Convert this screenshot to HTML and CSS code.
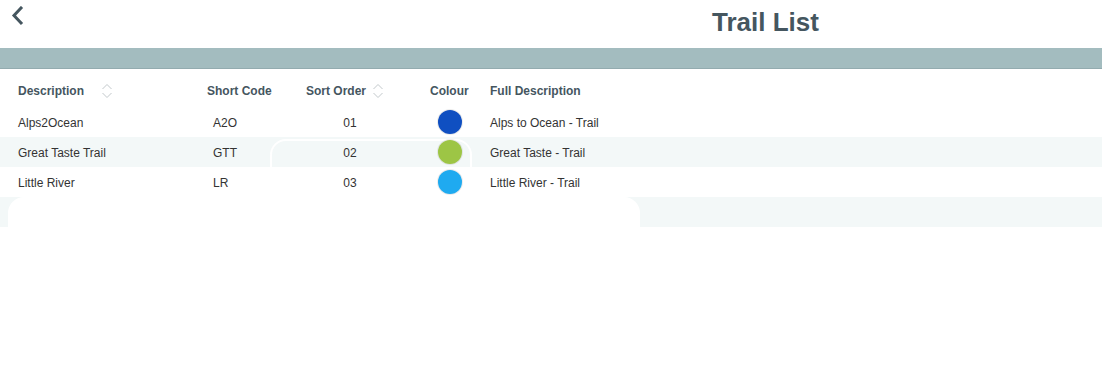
FILE: index.html
```html
<!DOCTYPE html>
<html lang="en">
<head>
    <meta charset="UTF-8">
    <title>Trail List</title>
    <link rel="stylesheet" href="styles.css">
</head>
<body>

<header class="topbar">
    <a class="back" href="#">
        <svg width="14" height="20" viewBox="0 0 14 20"><path d="M10 2 L3 9.5 L10 17" fill="none" stroke="#45565f" stroke-width="3" stroke-linecap="square"/></svg>
    </a>
    <h1>Trail List</h1>
</header>

<div class="band"></div>

<div class="table">
    <div class="row head">
        <div class="c1">Description <span class="sort"><svg width="12" height="16" viewBox="0 0 12 16"><path d="M1.5 6 L6 1.5 L10.5 6 M1.5 10 L6 14.5 L10.5 10" fill="none" stroke="#c3c9cc" stroke-width="1"/></svg></span></div>
        <div class="c2">Short Code</div>
        <div class="c3">Sort Order <span class="sort"><svg width="12" height="16" viewBox="0 0 12 16"><path d="M1.5 6 L6 1.5 L10.5 6 M1.5 10 L6 14.5 L10.5 10" fill="none" stroke="#c3c9cc" stroke-width="1"/></svg></span></div>
        <div class="c4">Colour</div>
        <div class="c5">Full Description</div>
    </div>
    <div class="row">
        <div class="c1">Alps2Ocean</div>
        <div class="c2">A2O</div>
        <div class="c3">01</div>
        <div class="c4"><span class="dot" style="background:#0f4fc1"></span></div>
        <div class="c5">Alps to Ocean - Trail</div>
    </div>
    <div class="row alt">
        <div class="ghost"></div>
        <div class="c1">Great Taste Trail</div>
        <div class="c2">GTT</div>
        <div class="c3">02</div>
        <div class="c4"><span class="dot" style="background:#9dc545"></span></div>
        <div class="c5">Great Taste - Trail</div>
    </div>
    <div class="row">
        <div class="c1">Little River</div>
        <div class="c2">LR</div>
        <div class="c3">03</div>
        <div class="c4"><span class="dot" style="background:#1faaf0"></span></div>
        <div class="c5">Little River - Trail</div>
    </div>
    <div class="row alt empty">
        <div class="card"></div>
    </div>
</div>

</body>
</html>
```

FILE: styles.css
```css
body {
    margin: 0;
    font-family: "Liberation Sans", Arial, sans-serif;
    background: #fff;
    color: #333;
}
.topbar {
    height: 48px;
    position: relative;
    display: flex;
    align-items: flex-start;
}
.back {
    display: block;
    margin: 6px 0 0 11px;
}
.topbar h1 {
    margin: 7px 0 0 687px;
    font-size: 26px;
    font-weight: bold;
    color: #45565f;
    line-height: 30px;
}
.band {
    height: 20px;
    background: #a3bcbf;
    border-bottom: 1px solid #93abaf;
}
.table {
    font-size: 12px;
}
.row {
    display: grid;
    grid-template-columns: 200px 100px 100px 90px 1fr;
    align-items: center;
    height: 30px;
    position: relative;
}
.row.head {
    height: 32px;
    padding-top: 6px;
    font-weight: bold;
    color: #45565f;
}
.row.alt {
    background: #f3f8f8;
}
.row .c1, .row .c2, .row .c3, .row .c5 {
    position: relative;
    padding-top: 2px;
}
.head .c1, .head .c2, .head .c3, .head .c5 {
    padding-top: 0;
}
.c1 {
    padding-left: 18px;
    display: flex;
    align-items: center;
}
.c2 {
    padding-left: 13px;
}
.head .c2 {
    padding-left: 7px;
}
.c3 {
    text-align: center;
}
.head .c3 {
    text-align: left;
    padding-left: 6px;
    display: flex;
    align-items: center;
}
.c4 {
    position: relative;
    padding-left: 38px;
    display: flex;
    align-items: center;
}
.head .c4 {
    padding-left: 30px;
}
.sort {
    display: inline-flex;
    margin-left: 6px;
}
.c1 .sort {
    margin-left: 17px;
}
.dot {
    display: block;
    width: 24px;
    height: 24px;
    border-radius: 50%;
    box-shadow: 0 0 0 1px rgba(0, 0, 0, 0.08);
}
.ghost {
    position: absolute;
    left: 270px;
    top: 2px;
    width: 198px;
    height: 40px;
    border: 2px solid #fff;
    border-radius: 16px;
}
.card {
    position: absolute;
    left: 8px;
    top: 0;
    width: 632px;
    height: 60px;
    background: #fff;
    border-radius: 16px 16px 0 0;
}
```
